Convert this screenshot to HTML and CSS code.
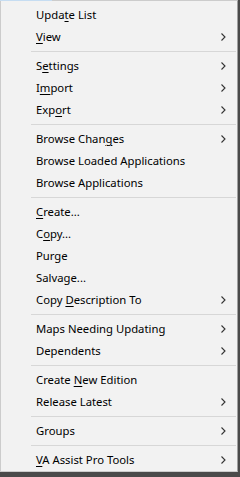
FILE: index.html
```html
<!DOCTYPE html>
<html lang="en">
<head>
    <meta charset="UTF-8">
    <meta name="viewport" content="width=device-width, initial-scale=1.0">
    <title>Context Menu</title>
    <link rel="stylesheet" href="styles.css">
</head>
<body>
    <div class="context-menu">
        <div class="menu-item"><span>Upda<u>t</u>e List</span></div>
        <div class="menu-item sub"><span><u>V</u>iew</span></div>
        <div class="separator"></div>
        <div class="menu-item sub"><span>S<u>e</u>ttings</span></div>
        <div class="menu-item sub"><span>I<u>m</u>port</span></div>
        <div class="menu-item sub"><span>Exp<u>o</u>rt</span></div>
        <div class="separator"></div>
        <div class="menu-item sub"><span>Browse Chan<u>g</u>es</span></div>
        <div class="menu-item"><span>Browse Loaded Applications</span></div>
        <div class="menu-item"><span>Browse Applications</span></div>
        <div class="separator"></div>
        <div class="menu-item"><span><u>C</u>reate...</span></div>
        <div class="menu-item"><span>C<u>o</u>py...</span></div>
        <div class="menu-item"><span>Purge</span></div>
        <div class="menu-item"><span>Salvage...</span></div>
        <div class="menu-item sub"><span>Copy <u>D</u>escription To</span></div>
        <div class="separator"></div>
        <div class="menu-item sub"><span>Maps Needing Updating</span></div>
        <div class="menu-item sub"><span>Dependents</span></div>
        <div class="separator"></div>
        <div class="menu-item"><span>Create <u>N</u>ew Edition</span></div>
        <div class="menu-item sub"><span>Release Latest</span></div>
        <div class="separator"></div>
        <div class="menu-item sub"><span>Groups</span></div>
        <div class="separator"></div>
        <div class="menu-item sub"><span><u>V</u>A Assist Pro Tools</span></div>
    </div>

    <script>
        // add the submenu arrow to every item that opens a submenu
        document.querySelectorAll(".menu-item.sub").forEach(function (item) {
            item.insertAdjacentHTML("beforeend",
                '<svg class="arrow" width="5" height="8" viewBox="0 0 5 8">' +
                '<path d="M0.5 0.5 L4 4 L0.5 7.5" fill="none" stroke="#333" stroke-width="1.1"/></svg>');
        });
    </script>
</body>
</html>
```

FILE: styles.css
```css
html, body {
    margin: 0;
    padding: 0;
}
body {
    width: 240px;
    height: 477px;
    background: #4a4a4a;
    font-family: "Segoe UI", "Noto Sans", sans-serif;
    font-size: 11.3px;
    color: #000;
    overflow: hidden;
}
.context-menu {
    position: relative;
    width: 238px;
    height: 472px;
    box-sizing: border-box;
    background: #f2f2f2;
    border: 1px solid #ccc;
    border-right-color: #a0a0a0;
    padding-top: 3px;
}
.context-menu::before {
    content: "";
    position: absolute;
    top: -1px;
    left: -1px;
    width: 52px;
    height: 1px;
    background: #c6ddf2;
}
.menu-item {
    display: flex;
    align-items: center;
    justify-content: space-between;
    height: 22px;
    padding: 0 11px 1px 35px;
    box-sizing: border-box;
    white-space: nowrap;
}
.menu-item u {
    text-underline-offset: 2px;
}
.arrow {
    display: block;
}
.separator {
    height: 1px;
    margin: 3px 1px 3px 30px;
    background: #d7d7d7;
}
```
